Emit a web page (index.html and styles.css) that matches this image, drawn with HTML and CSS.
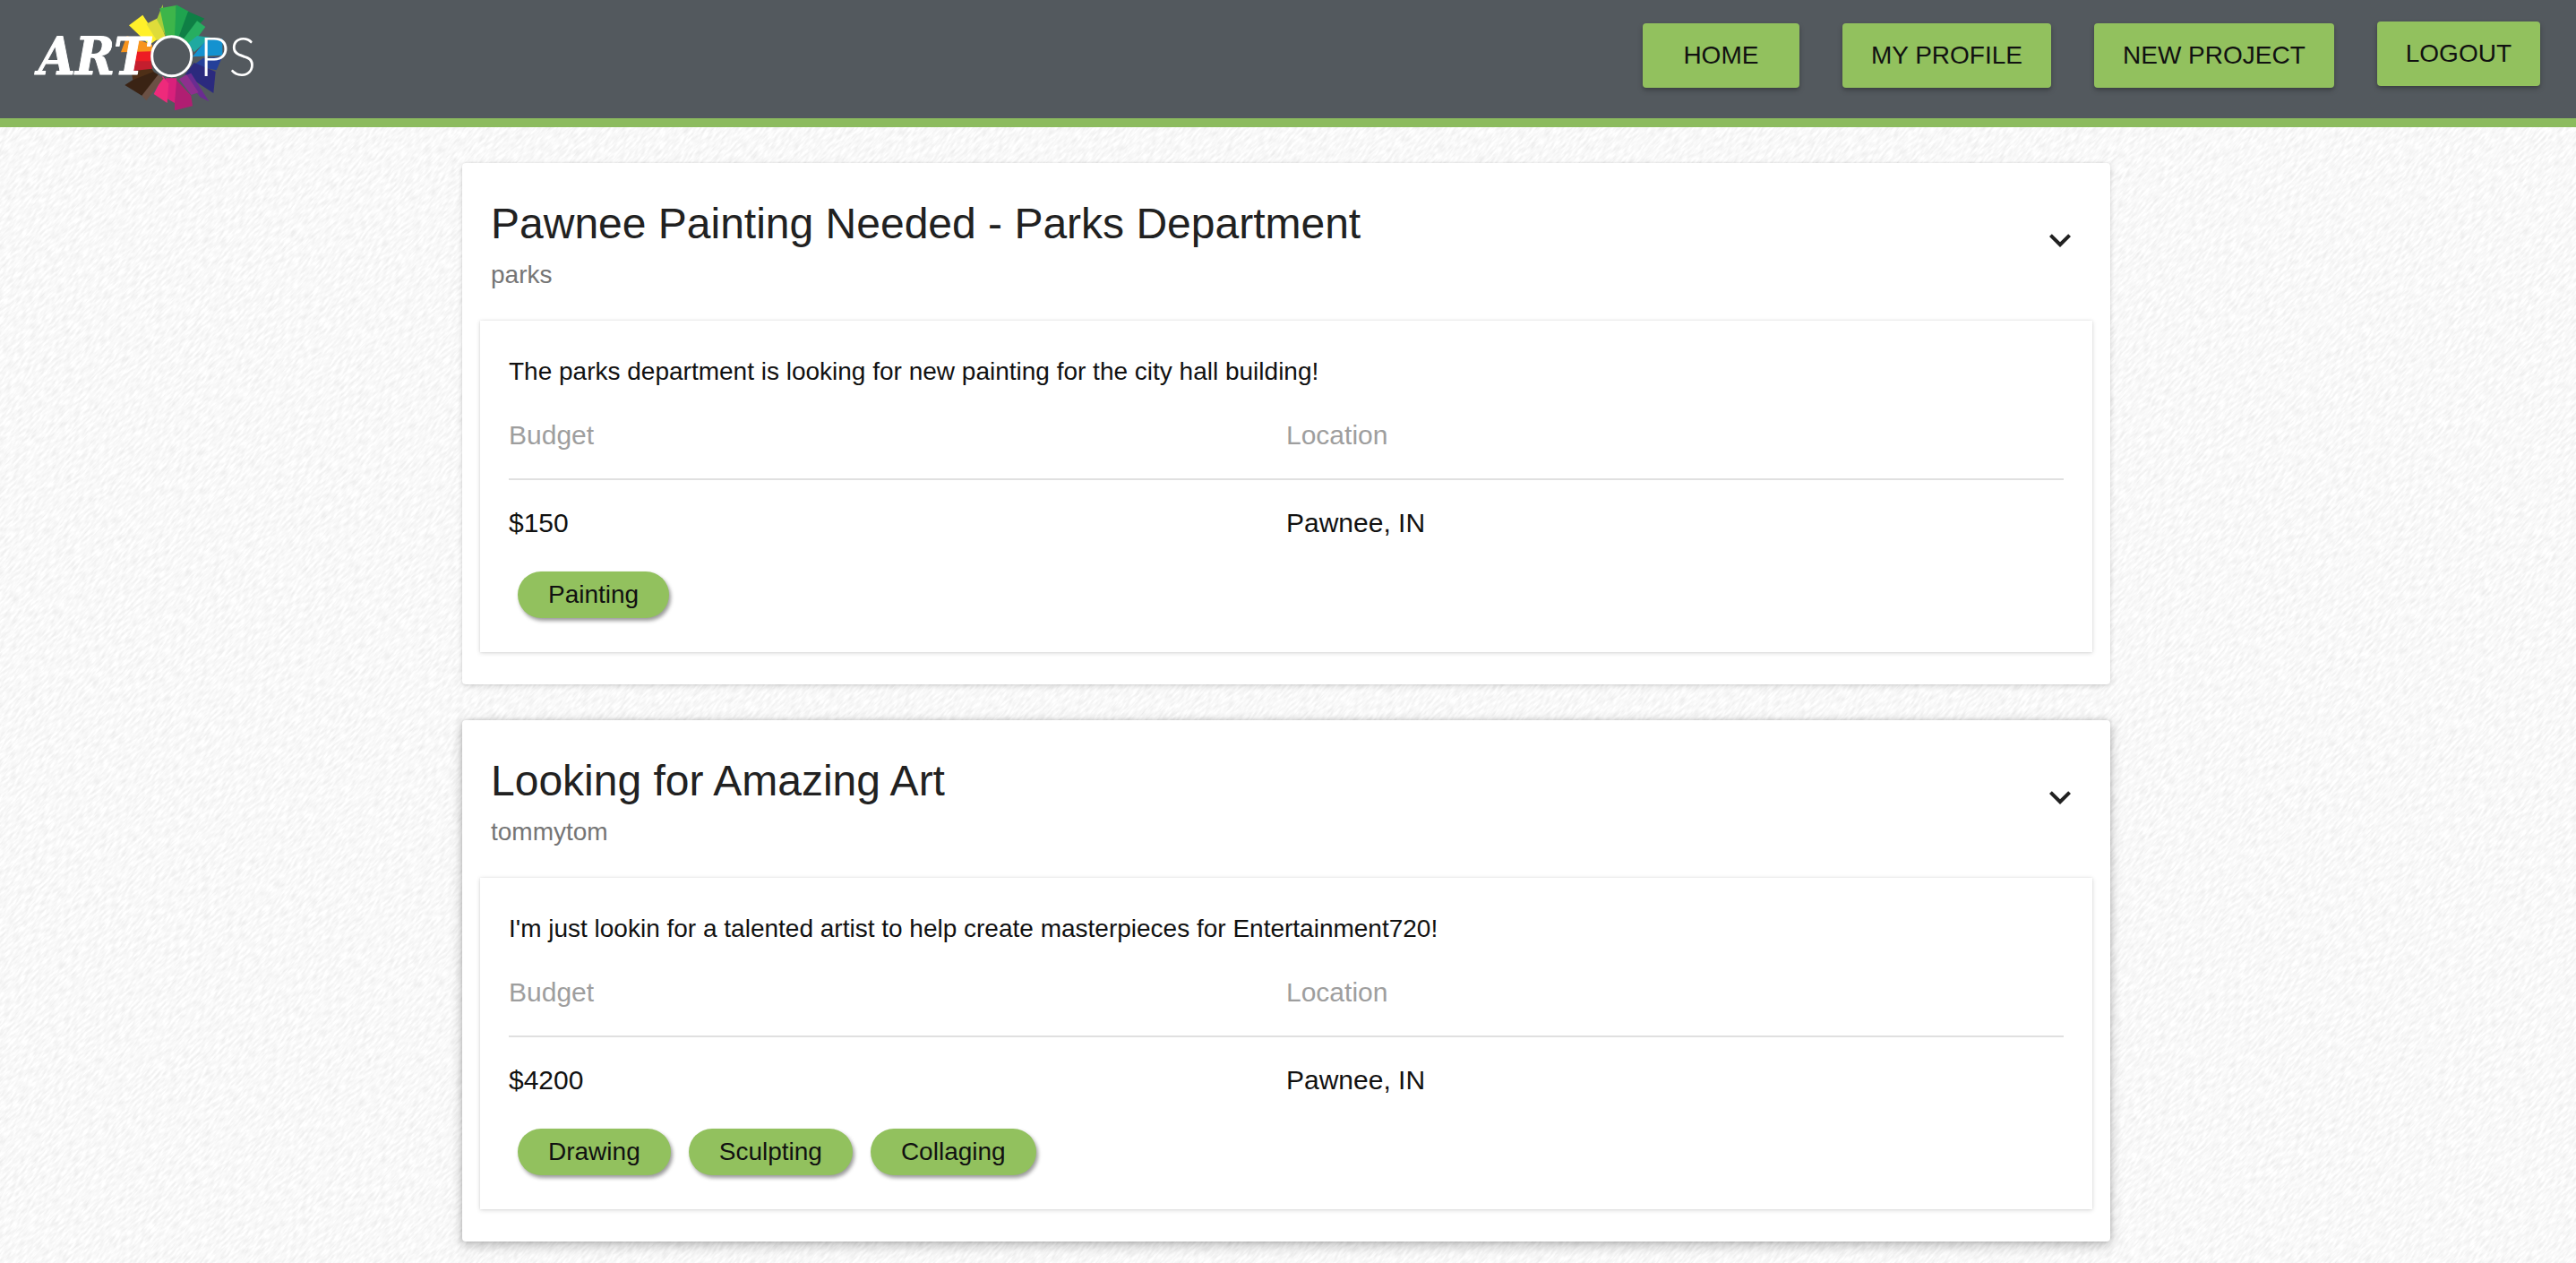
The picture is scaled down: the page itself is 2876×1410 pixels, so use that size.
FILE: index.html
```html
<!DOCTYPE html>
<html lang="en">
<head>
<meta charset="utf-8">
<title>ArtOps</title>
<link rel="stylesheet" href="styles.css">
</head>
<body>
<header class="topbar">
  <a class="logo" href="#" aria-label="ArtOps">
    <svg class="logo-art" width="340" height="132" viewBox="0 0 1020 396">
      <polygon fill="#fff02a" points="432,85 478,50 530,130 500,150"/>
      <polygon fill="#dfdc3a" points="490,80 530,60 555,125 525,135"/>
      <polygon fill="#a6ce39" points="525,65 545,15 555,120"/>
      <polygon fill="#3db54a" points="535,28 590,18 590,120 555,120"/>
      <polygon fill="#1fa34f" points="590,16 632,38 600,122 585,120"/>
      <polygon fill="#0e7f45" points="630,38 685,62 620,135 600,120"/>
      <polygon fill="#27ae60" points="660,70 688,90 640,155 615,130"/>
      <polygon fill="#1fa9a0" points="660,120 705,125 650,175 630,145"/>
      <polygon fill="#1492d0" points="690,135 745,130 745,185 645,190"/>
      <polygon fill="#24409a" points="680,195 745,190 725,235 645,220"/>
      <polygon fill="#2b2a7e" points="650,210 722,240 715,312 620,250"/>
      <polygon fill="#6a2c91" points="640,245 700,340 670,325 615,255"/>
      <polygon fill="#8e2f8e" points="625,250 665,310 640,318 600,265"/>
      <polygon fill="#b01e72" points="585,262 640,320 645,355 585,370"/>
      <polygon fill="#d9207b" points="555,262 592,262 585,345 550,325"/>
      <polygon fill="#ee2a7b" points="545,255 565,280 560,345 515,315"/>
      <polygon fill="#6b5044" points="520,245 548,262 490,337 475,320"/>
      <polygon fill="#3a2314" points="500,232 530,250 475,320 418,285"/>
      <polygon fill="#4f2f17" points="440,240 505,225 515,240 445,268"/>
      <polygon fill="#c41e2e" points="445,205 505,200 510,230 442,238"/>
      <polygon fill="#ed1c24" points="445,165 510,170 505,205 445,205"/>
      <polygon fill="#f7941d" points="405,175 425,120 510,150 510,172"/>
      <circle class="logo-ring" cx="575" cy="188" r="66"/>
      <text class="logo-art-text" x="128" y="248" textLength="372" lengthAdjust="spacingAndGlyphs">ART</text>
      <text class="logo-ops-text" x="668" y="255" textLength="190" lengthAdjust="spacingAndGlyphs">PS</text>
    </svg>
  </a>
  <nav class="nav">
    <a class="nav-btn" href="#">Home</a>
    <a class="nav-btn" href="#">My Profile</a>
    <a class="nav-btn" href="#">New Project</a>
    <a class="nav-btn nav-btn-raised" href="#">Logout</a>
  </nav>
</header>

<main class="list">
  <article class="project">
    <div class="project-head">
      <div>
        <h2 class="project-title">Pawnee Painting Needed - Parks Department</h2>
        <div class="project-owner">parks</div>
      </div>
      <svg class="chevron" width="48" height="48" viewBox="0 0 24 24"><path d="M16.59 8.59L12 13.17 7.41 8.59 6 10l6 6 6-6z"/></svg>
    </div>
    <div class="details">
      <p class="desc">The parks department is looking for new painting for the city hall building!</p>
      <div class="facts facts-head"><span>Budget</span><span>Location</span></div>
      <div class="facts facts-body"><span>$150</span><span>Pawnee, IN</span></div>
      <div class="chips"><span class="chip">Painting</span></div>
    </div>
  </article>

  <article class="project project-hover">
    <div class="project-head">
      <div>
        <h2 class="project-title">Looking for Amazing Art</h2>
        <div class="project-owner">tommytom</div>
      </div>
      <svg class="chevron" width="48" height="48" viewBox="0 0 24 24"><path d="M16.59 8.59L12 13.17 7.41 8.59 6 10l6 6 6-6z"/></svg>
    </div>
    <div class="details">
      <p class="desc">I'm just lookin for a talented artist to help create masterpieces for Entertainment720!</p>
      <div class="facts facts-head"><span>Budget</span><span>Location</span></div>
      <div class="facts facts-body"><span>$4200</span><span>Pawnee, IN</span></div>
      <div class="chips"><span class="chip">Drawing</span><span class="chip">Sculpting</span><span class="chip">Collaging</span></div>
    </div>
  </article>
</main>
</body>
</html>
```
FILE: styles.css
```css
* { box-sizing: border-box; }
html, body { height: 100%; }
body {
  margin: 0;
  overflow: hidden;
  font-family: "Liberation Sans", Arial, sans-serif;
  color: #111;
  background-color: #fff;
  background-image: url("data:image/svg+xml,%3Csvg xmlns='http://www.w3.org/2000/svg' width='2876' height='1410'%3E%3Cfilter id='n' x='0' y='0' width='100%25' height='100%25' color-interpolation-filters='sRGB'%3E%3CfeTurbulence type='fractalNoise' baseFrequency='0.1 0.4' numOctaves='2' seed='7'/%3E%3CfeColorMatrix values='0 0 0 0 0 0 0 0 0 0 0 0 0 0 0 0.14 0 0 0 -0.045'/%3E%3C/filter%3E%3Cg transform='rotate(-48 1438 705)'%3E%3Crect x='-600' y='-1300' width='4100' height='4100' filter='url(%23n)'/%3E%3C/g%3E%3C/svg%3E");
  background-repeat: no-repeat;
}
.topbar {
  position: relative;
  display: flex;
  justify-content: flex-end;
  height: 142px;
  background: #53595e;
  border-bottom: 10px solid #8cbb5e;
}
.logo {
  position: absolute;
  left: 0;
  top: 0;
  display: block;
  width: 340px;
  height: 132px;
}
.logo-art { display: block; overflow: visible; }
.logo-ring { fill: #53595e; stroke: #fff; stroke-width: 9; }
.logo-art-text {
  fill: #fff;
  stroke: #fff;
  stroke-width: 3;
  stroke-linejoin: round;
  font-family: "DejaVu Serif", serif;
  font-weight: 700;
  font-style: italic;
  font-size: 172px;
}
.logo-ops-text {
  fill: #fff;
  font-family: "Lato", sans-serif;
  font-weight: 300;
  font-size: 182px;
}
.nav {
  display: flex;
  gap: 48px;
  align-items: flex-start;
  padding: 24px 40px 0 0;
}
.nav-btn {
  display: flex;
  align-items: center;
  justify-content: center;
  min-width: 175px;
  height: 72px;
  margin-top: 2px;
  padding: 0 32px;
  border-radius: 4px;
  background: #92c15e;
  box-shadow: 0 3px 6px rgba(0,0,0,0.2), 0 2px 3px rgba(0,0,0,0.12);
  color: #111;
  font-size: 28px;
  text-transform: uppercase;
  text-decoration: none;
}
.nav-btn-raised { margin-top: 0; }
.list {
  display: flex;
  flex-direction: column;
  align-items: center;
  gap: 40px;
  padding: 40px 4px 0 0;
}
.project {
  width: 1840px;
  height: 582px;
  background: #fff;
  border-radius: 4px;
  box-shadow: 0 2px 6px rgba(0,0,0,0.14), 0 0 3px rgba(0,0,0,0.08);
}
.project-hover {
  box-shadow: 0 4px 14px rgba(0,0,0,0.26), 0 0 4px rgba(0,0,0,0.16);
}
.project-head {
  display: flex;
  justify-content: space-between;
  align-items: flex-start;
  height: 176px;
  padding: 40px 32px 0;
}
.project-title {
  margin: 0;
  font-size: 48px;
  font-weight: 400;
  line-height: 56px;
  color: #212121;
}
.project-owner {
  margin-top: 11px;
  font-size: 28px;
  line-height: 36px;
  color: #757575;
}
.chevron { margin: 22px 0 0; fill: #212121; }
.details {
  margin: 0 20px;
  height: 370px;
  padding: 39px 32px 0;
  background: #fff;
  box-shadow: 0 1px 5px rgba(0,0,0,0.16), 0 0 2px rgba(0,0,0,0.08);
}
.desc {
  margin: 0 0 35px;
  font-size: 28px;
  line-height: 36px;
}
.facts {
  display: grid;
  grid-template-columns: 1fr 1fr;
  font-size: 30px;
  line-height: 36px;
}
.facts-head {
  padding-bottom: 30px;
  border-bottom: 2px solid #e0e0e0;
  color: #9e9e9e;
}
.facts-body { padding-top: 30px; }
.chips {
  display: flex;
  gap: 20px;
  margin: 36px 0 0 10px;
}
.chip {
  height: 52px;
  padding: 0 34px;
  border-radius: 26px;
  background: #92c15e;
  box-shadow: 2px 3px 4px rgba(0,0,0,0.4);
  color: #111;
  font-size: 28px;
  line-height: 52px;
}
```
